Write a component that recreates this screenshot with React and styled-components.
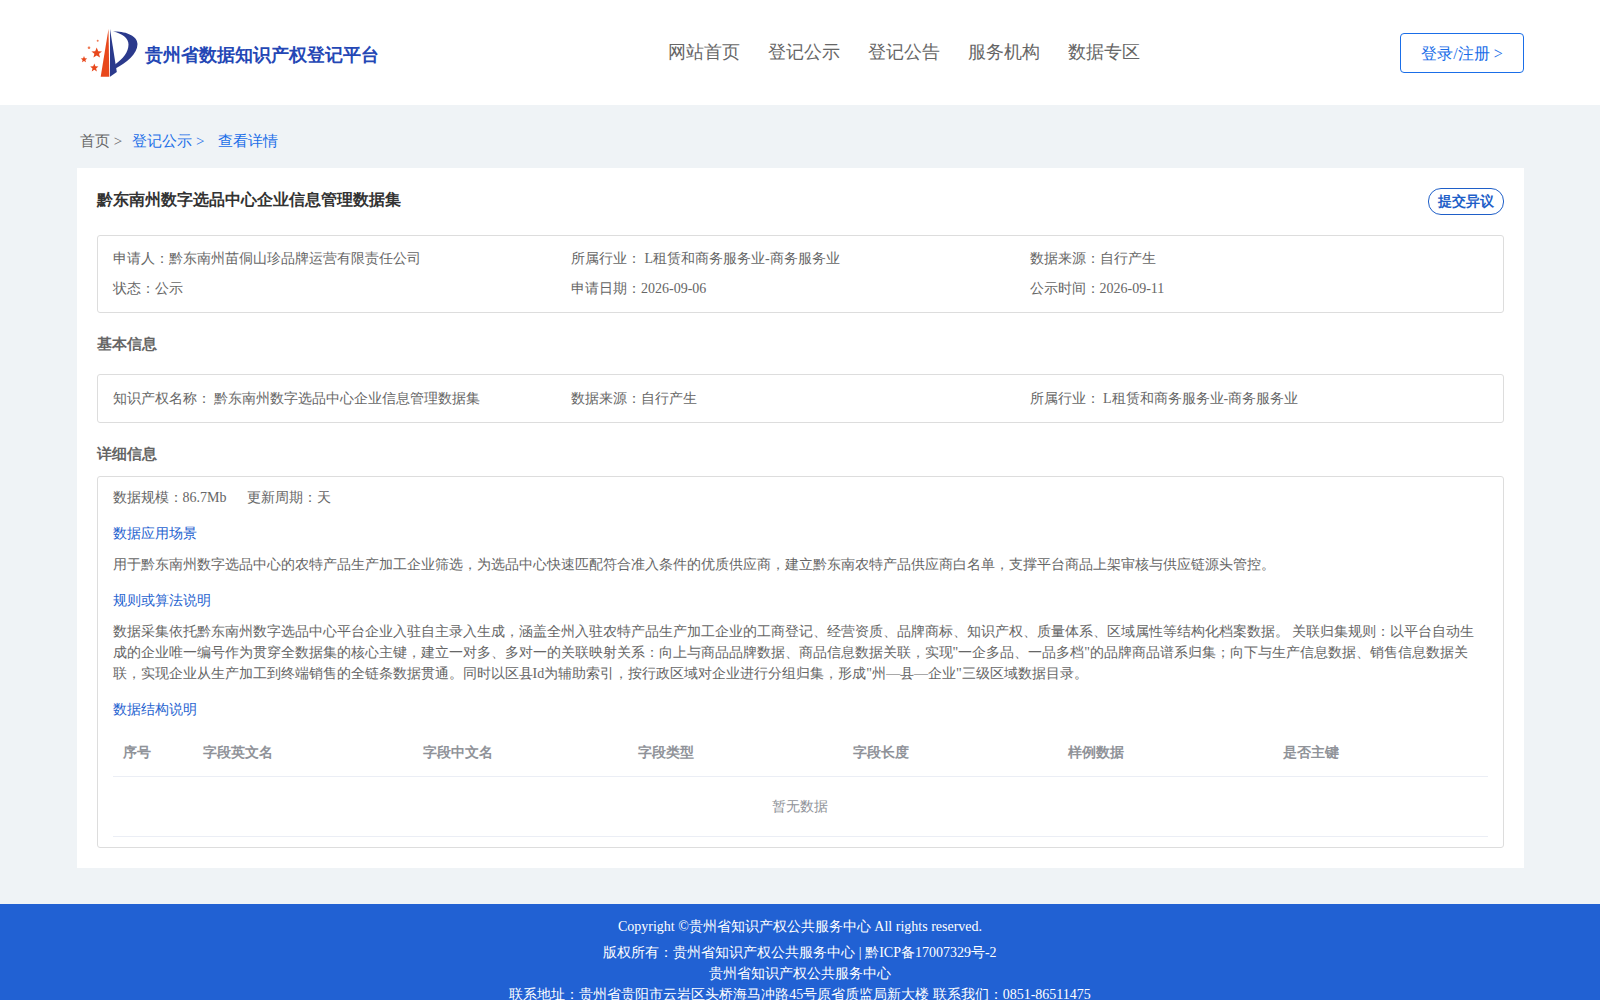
import styled, { createGlobalStyle } from "styled-components";

const GlobalStyle = createGlobalStyle`
  html, body { margin:0; padding:0; background:#eff3f6; }
  body { font-family:"Liberation Serif",serif; font-size:14px; color:#666; }
  * { box-sizing:border-box; }
`;

const StyledHeader = styled.header`
  height:105px;
  background:#fff;
  padding:0 76px 0 80px;
  display:flex;
  align-items:center;
`;
const Logo = styled.div`
  width:588px;
  display:flex;
  align-items:center;
  gap:7px;
  padding-top:4px;
  color:#2447b5;
  font-size:18px;
  font-weight:bold;
  svg { margin-top:-4px; }
`;
const Nav = styled.nav`
  display:flex;
  gap:28px;
  font-size:18px;
  color:#666;
  margin-top:-1px;
`;
const LoginButton = styled.button`
  margin-left:auto;
  width:124px;
  height:40px;
  padding:4px 0 0;
  background:#fff;
  border:1px solid #1a6ee8;
  border-radius:4px;
  color:#1a6ee8;
  font:inherit;
  font-size:16px;
`;
const Crumbs = styled.div`
  height:63px;
  padding:10px 0 0 80px;
  display:flex;
  align-items:center;
  font-size:15px;
  gap:10px;
`;
const Crumb = styled.span`
  color:${p => (p.$active ? "#1a6ee8" : "#666")};
  margin-left:${p => p.$gap || 0}px;
`;
const Card = styled.main`
  margin:0 76.5px;
  background:#fff;
  padding:20px;
`;
const TitleRow = styled.div`
  display:flex;
  justify-content:space-between;
  align-items:flex-start;
  margin-bottom:20px;
`;
const Title = styled.h1`
  margin:0;
  font-size:16px;
  font-weight:bold;
  color:#333;
  line-height:24px;
`;
const Dissent = styled.button`
  width:76px;
  height:27px;
  padding:0;
  background:#fff;
  border:1px solid #1f5fc8;
  border-radius:13px;
  color:#1f5fc8;
  font:inherit;
  font-size:14px;
  font-weight:bold;
`;
const InfoBox = styled.div`
  border:1px solid #ddd;
  border-radius:3px;
  padding:${p => p.$pad || "8px 14.5px 8px 15px"};
`;
const InfoGrid = styled.div`
  display:grid;
  grid-template-columns:repeat(3, 1fr);
  line-height:30px;
`;
const SectionTitle = styled.h2`
  margin:${p => p.$margin};
  font-size:15px;
  font-weight:bold;
  color:#666;
  line-height:22px;
`;
const Plain = styled.div`
  line-height:21px;
  margin-bottom:${p => p.$after || 0}px;
`;
const Spec = styled.span`
  margin-right:21px;
`;
const SubTitle = styled.div`
  color:#1f63d0;
  line-height:21px;
  margin-bottom:10px;
`;
const TableHead = styled.div`
  display:grid;
  grid-template-columns:80px 220px 215px 215px 215px 215px 1fr;
  height:47px;
  margin-top:3px;
  align-items:center;
  padding-left:10px;
  border-bottom:1px solid #ebeef5;
  font-weight:bold;
  color:#909399;
`;
const Empty = styled.div`
  height:60px;
  display:flex;
  align-items:center;
  justify-content:center;
  border-bottom:1px solid #ebeef5;
  color:#909399;
`;
const Footer = styled.footer`
  margin-top:36px;
  background:#2161d3;
  color:#fff;
  text-align:center;
  padding:12px 0 10px;
  line-height:21px;
`;
const Copyright = styled.div`
  margin-bottom:5px;
`;

function LogoMark() {
  return (
    <svg width="58" height="50" viewBox="0 0 58 50">
      <polygon points="28.5,1 20.7,48.7 29.3,48.7" fill="#e8481c" />
      <polygon points="30,1 30,48.7 36.8,44 " fill="#2b3a8c" />
      <path d="M33 3.5C46 3 57.5 8 57.5 16C57.5 26 46 35 35.5 40.5L35 36.5C43 31 48.5 24 48.5 16.5C48.5 10 42 5.5 33 3.5Z" fill="#2b3a8c" />
      <polygon points="16.7,19.5 18.2,23.2 22,23.4 19,25.8 20,29.5 16.7,27.4 13.4,29.5 14.4,25.8 11.4,23.4 15.2,23.2" fill="#e8481c" />
      <polygon points="4,28 4.9,30.2 7.2,30.4 5.4,31.9 6,34.2 4,33 2,34.2 2.6,31.9 .8,30.4 3.1,30.2" fill="#e8481c" />
      <polygon points="14.3,35.5 15.4,38.3 18.4,38.5 16.1,40.4 16.9,43.4 14.3,41.8 11.7,43.4 12.5,40.4 10.2,38.5 13.2,38.3" fill="#e8481c" />
      <circle cx="9" cy="19.7" r="1.3" fill="#ee7a55" />
      <circle cx="17.7" cy="12.7" r="1" fill="#ee7a55" />
    </svg>
  );
}

export default function App() {
  return (
    <>
      <GlobalStyle />
      <StyledHeader>
        <Logo><LogoMark />贵州省数据知识产权登记平台</Logo>
        <Nav>
          <span>网站首页</span>
          <span>登记公示</span>
          <span>登记公告</span>
          <span>服务机构</span>
          <span>数据专区</span>
        </Nav>
        <LoginButton>登录/注册 &gt;</LoginButton>
      </StyledHeader>
      <Crumbs>
        <Crumb>首页 &gt;</Crumb>
        <Crumb $active>登记公示 &gt;</Crumb>
        <Crumb $active $gap={4}>查看详情</Crumb>
      </Crumbs>
      <Card>
        <TitleRow>
          <Title>黔东南州数字选品中心企业信息管理数据集</Title>
          <Dissent>提交异议</Dissent>
        </TitleRow>
        <InfoBox>
          <InfoGrid>
            <span>申请人：黔东南州苗侗山珍品牌运营有限责任公司</span>
            <span>所属行业： L租赁和商务服务业-商务服务业</span>
            <span>数据来源：自行产生</span>
            <span>状态：公示</span>
            <span>申请日期：2026-09-06</span>
            <span>公示时间：2026-09-11</span>
          </InfoGrid>
        </InfoBox>
        <SectionTitle $margin="20px 0 19px">基本信息</SectionTitle>
        <InfoBox $pad="9px 14.5px 8px 15px">
          <InfoGrid>
            <span>知识产权名称： 黔东南州数字选品中心企业信息管理数据集</span>
            <span>数据来源：自行产生</span>
            <span>所属行业： L租赁和商务服务业-商务服务业</span>
          </InfoGrid>
        </InfoBox>
        <SectionTitle $margin="20px 0 11px">详细信息</SectionTitle>
        <InfoBox $pad="10px 15px">
          <Plain $after={15}>
            <Spec>数据规模：86.7Mb</Spec>
            <Spec>更新周期：天</Spec>
          </Plain>
          <SubTitle>数据应用场景</SubTitle>
          <Plain $after={15}>用于黔东南州数字选品中心的农特产品生产加工企业筛选，为选品中心快速匹配符合准入条件的优质供应商，建立黔东南农特产品供应商白名单，支撑平台商品上架审核与供应链源头管控。</Plain>
          <SubTitle>规则或算法说明</SubTitle>
          <Plain $after={15}>数据采集依托黔东南州数字选品中心平台企业入驻自主录入生成，涵盖全州入驻农特产品生产加工企业的工商登记、经营资质、品牌商标、知识产权、质量体系、区域属性等结构化档案数据。 关联归集规则：以平台自动生成的企业唯一编号作为贯穿全数据集的核心主键，建立一对多、多对一的关联映射关系：向上与商品品牌数据、商品信息数据关联，实现"一企多品、一品多档"的品牌商品谱系归集；向下与生产信息数据、销售信息数据关联，实现企业从生产加工到终端销售的全链条数据贯通。同时以区县Id为辅助索引，按行政区域对企业进行分组归集，形成"州—县—企业"三级区域数据目录。</Plain>
          <SubTitle>数据结构说明</SubTitle>
          <TableHead>
            <span>序号</span>
            <span>字段英文名</span>
            <span>字段中文名</span>
            <span>字段类型</span>
            <span>字段长度</span>
            <span>样例数据</span>
            <span>是否主键</span>
          </TableHead>
          <Empty>暂无数据</Empty>
        </InfoBox>
      </Card>
      <Footer>
        <Copyright>Copyright ©贵州省知识产权公共服务中心 All rights reserved.</Copyright>
        <div>版权所有：贵州省知识产权公共服务中心 | 黔ICP备17007329号-2</div>
        <div>贵州省知识产权公共服务中心</div>
        <div>联系地址：贵州省贵阳市云岩区头桥海马冲路45号原省质监局新大楼 联系我们：0851-86511475</div>
      </Footer>
    </>
  );
}
